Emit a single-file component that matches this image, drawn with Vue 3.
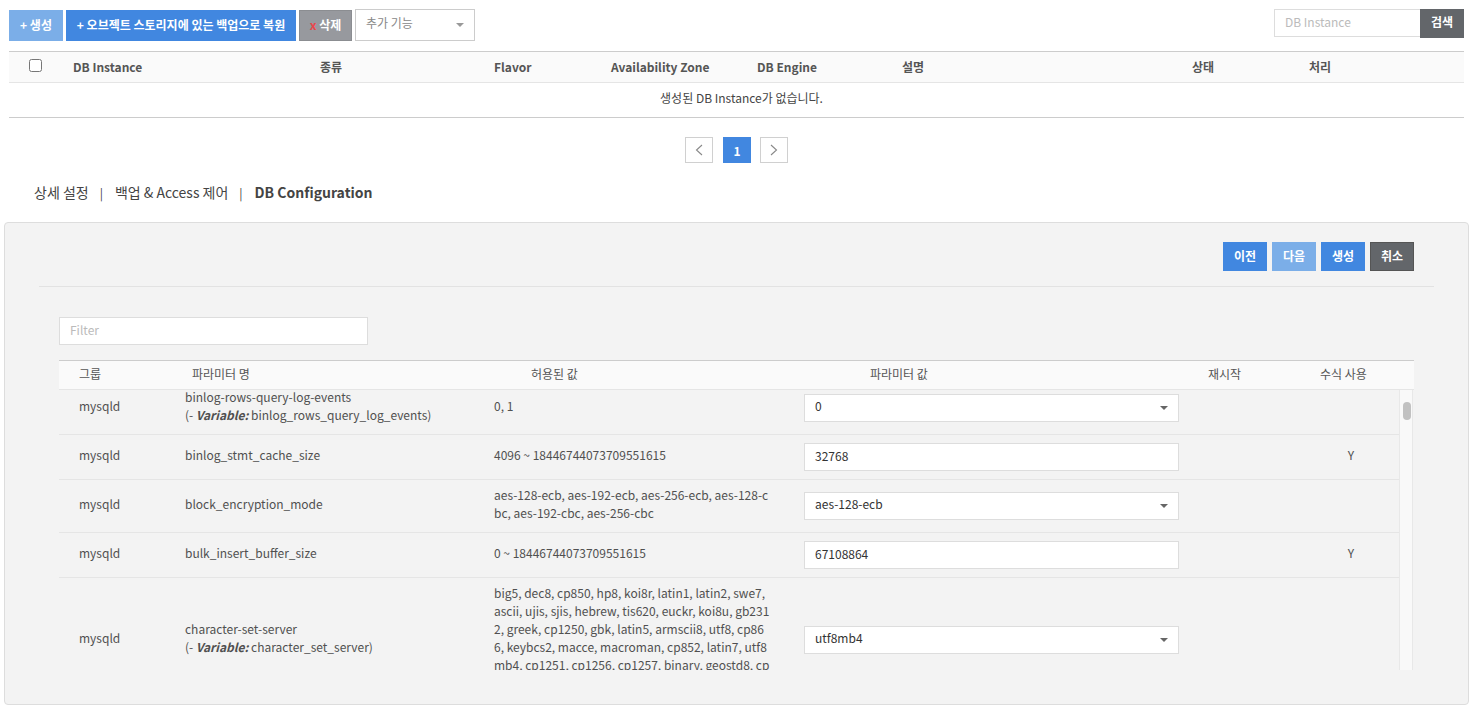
<template>
  <div class="page">
    <div class="toolbar">
      <button type="button" class="btn btn-light">+ 생성</button>
      <button type="button" class="btn btn-blue">+ 오브젝트 스토리지에 있는 백업으로 복원</button>
      <button type="button" class="btn btn-gray"><span class="x">x</span> 삭제</button>
      <div class="select extra">
        <span>추가 기능</span>
        <i class="caret"></i>
      </div>
      <div class="search">
        <input type="text" class="search-input" placeholder="DB Instance" />
        <button type="button" class="btn btn-dark search-btn">검색</button>
      </div>
    </div>

    <div class="db-table">
      <div class="db-head">
        <div class="check-cell"><input type="checkbox" class="check" /></div>
        <div v-for="col in dbColumns" :key="col">{{ col }}</div>
      </div>
      <div class="db-empty">생성된 DB Instance가 없습니다.</div>
    </div>

    <div class="pager">
      <button type="button" class="page-btn">
        <svg width="8" height="12" viewBox="0 0 8 12"><path d="M7 1 L1.5 6 L7 11" fill="none" stroke="#888" stroke-width="1.1" /></svg>
      </button>
      <button type="button" class="page-btn current">1</button>
      <button type="button" class="page-btn">
        <svg width="8" height="12" viewBox="0 0 8 12"><path d="M1 1 L6.5 6 L1 11" fill="none" stroke="#888" stroke-width="1.1" /></svg>
      </button>
    </div>

    <div class="tabs">
      <a>상세 설정</a>
      <span class="sep">|</span>
      <a>백업 &amp; Access 제어</a>
      <span class="sep">|</span>
      <a class="active">DB Configuration</a>
    </div>

    <div class="panel">
      <div class="panel-actions">
        <button type="button" class="btn btn-blue act">이전</button>
        <button type="button" class="btn btn-light act">다음</button>
        <button type="button" class="btn btn-blue act">생성</button>
        <button type="button" class="btn btn-dark act bordered">취소</button>
      </div>

      <div class="panel-body">
        <input type="text" class="filter" placeholder="Filter" />

        <div class="param-head">
          <div class="h-group">그룹</div>
          <div class="h-name">파라미터 명</div>
          <div class="h-allowed">허용된 값</div>
          <div class="h-value">파라미터 값</div>
          <div>재시작</div>
          <div>수식 사용</div>
        </div>

        <div class="param-wrap">
          <div class="param-rows" ref="rowsBox">
            <div v-for="row in params" :key="row.name" class="param-row">
              <div class="c-group cell-text">mysqld</div>
              <div class="c-name cell-text">
                {{ row.name }}
                <template v-if="row.variable">
                  <br />(- <b><i>Variable:</i></b> {{ row.variable }})
                </template>
              </div>
              <div class="c-allowed cell-text">{{ row.allowed }}</div>
              <div>
                <div v-if="row.select" class="select value-box">
                  <span>{{ row.value }}</span>
                  <i class="caret dark"></i>
                </div>
                <input v-else type="text" class="value-box text" :value="row.value" />
              </div>
              <div></div>
              <div class="c-formula cell-text">{{ row.formula ? 'Y' : '' }}</div>
            </div>
          </div>
          <div class="scroll-track"><div class="scroll-thumb"></div></div>
        </div>
      </div>
    </div>
  </div>
</template>

<script setup>
import { ref, onMounted } from 'vue';

const dbColumns = [
  'DB Instance',
  '종류',
  'Flavor',
  'Availability Zone',
  'DB Engine',
  '설명',
  '상태',
  '처리',
];

const params = [
  {
    name: 'binlog-rows-query-log-events',
    variable: 'binlog_rows_query_log_events',
    allowed: '0, 1',
    value: '0',
    select: true,
  },
  {
    name: 'binlog_stmt_cache_size',
    allowed: '4096 ~ 18446744073709551615',
    value: '32768',
    formula: true,
  },
  {
    name: 'block_encryption_mode',
    allowed: 'aes-128-ecb, aes-192-ecb, aes-256-ecb, aes-128-cbc, aes-192-cbc, aes-256-cbc',
    value: 'aes-128-ecb',
    select: true,
  },
  {
    name: 'bulk_insert_buffer_size',
    allowed: '0 ~ 18446744073709551615',
    value: '67108864',
    formula: true,
  },
  {
    name: 'character-set-server',
    variable: 'character_set_server',
    allowed:
      'big5, dec8, cp850, hp8, koi8r, latin1, latin2, swe7, ascii, ujis, sjis, hebrew, tis620, euckr, koi8u, gb2312, greek, cp1250, gbk, latin5, armscii8, utf8, cp866, keybcs2, macce, macroman, cp852, latin7, utf8mb4, cp1251, cp1256, cp1257, binary, geostd8, cp932, eucjpms',
    value: 'utf8mb4',
    select: true,
  },
];

const rowsBox = ref(null);

// the list is already scrolled a little in the screen
onMounted(() => {
  rowsBox.value.scrollTop = 8;
});
</script>

<style>
body {
  background: #fff;
}
</style>

<style scoped>
.page {
  width: 1475px;
  height: 711px;
  overflow: hidden;
  box-sizing: border-box;
  font-family: 'Noto Sans CJK KR', 'Noto Sans', sans-serif;
  font-size: 12px;
  color: #555;
}
.toolbar {
  display: flex;
  align-items: flex-start;
  padding: 9px 11px 0 9px;
  height: 51px;
  box-sizing: border-box;
}
.btn {
  border: 0;
  margin: 0;
  padding: 0 0 2px;
  color: #fff;
  font-family: inherit;
  font-size: 12px;
  font-weight: 700;
  cursor: pointer;
  white-space: pre;
}
.toolbar > .btn {
  height: 31px;
  margin-top: 1px;
  margin-right: 3px;
}
.btn-light {
  background: #7baee8;
  width: 54px;
}
.btn-blue {
  background: #4187e0;
  width: 230px;
}
.btn-gray {
  background: #97999e;
  border: 1px solid #8b8d91;
  box-sizing: border-box;
  width: 53px;
}
.btn-dark {
  background: #63666a;
}
.x {
  color: #e8474c;
}
.select {
  display: flex;
  align-items: center;
  justify-content: space-between;
  box-sizing: border-box;
  background: #fff;
  border: 1px solid #ccc;
}
.extra {
  width: 120px;
  height: 32px;
  padding: 0 10px;
  color: #888;
}
.extra span {
  padding-bottom: 5px;
}
.caret {
  display: block;
  width: 0;
  height: 0;
  border-left: 4px solid transparent;
  border-right: 4px solid transparent;
  border-top: 4px solid #999;
}
.caret.dark {
  border-top-color: #666;
}
.search {
  display: flex;
  margin-left: auto;
}
.search-input {
  width: 146px;
  height: 28px;
  box-sizing: border-box;
  border: 1px solid #ddd;
  border-right: 0;
  padding: 0 10px 4px;
  font-family: inherit;
  font-size: 12px;
  outline: none;
}
.search-input::placeholder,
.filter::placeholder {
  color: #bbb;
}
.search-btn {
  width: 44px;
  height: 29px;
  padding-bottom: 4px;
}

.db-table {
  margin: 0 11px 0 9px;
  border-top: 1px solid #ccc;
  border-bottom: 1px solid #ccc;
}
.db-head {
  display: grid;
  grid-template-columns: 64px 247px 174px 117px 146px 145px 290px 117px 155px;
  align-items: center;
  height: 31px;
  box-sizing: border-box;
  padding-bottom: 1px;
  background: #fafafa;
  border-bottom: 1px solid #e5e5e5;
  font-weight: 700;
}
.check-cell {
  display: flex;
  padding-left: 20px;
  padding-bottom: 2px;
}
.check {
  margin: 0;
  width: 13px;
  height: 13px;
}
.db-empty {
  height: 34px;
  line-height: 30px;
  padding-left: 10px;
  text-align: center;
  color: #444;
}

.pager {
  display: flex;
  justify-content: center;
  gap: 9px;
  padding-top: 19px;
  margin-left: -2px;
}
.page-btn {
  width: 28px;
  height: 26px;
  box-sizing: border-box;
  padding: 0;
  display: flex;
  align-items: center;
  justify-content: center;
  background: #fff;
  border: 1px solid #d0d0d0;
  cursor: pointer;
  font-family: inherit;
}
.page-btn.current {
  margin-left: 1px;
  background: #4187e0;
  border-color: #4187e0;
  color: #fff;
  font-size: 12px;
  font-weight: 700;
}

.tabs {
  display: flex;
  align-items: center;
  height: 20px;
  box-sizing: border-box;
  margin-top: 20px;
  padding: 0 0 2px 34px;
  font-size: 14px;
  color: #444;
}
.sep {
  font-size: 12px;
  margin: 0 12px 0 11px;
}
.active {
  font-weight: 700;
}

.panel {
  margin: 19px 6px 0 4px;
  height: 483px;
  box-sizing: border-box;
  background: #f3f3f3;
  border: 1px solid #ddd;
  border-radius: 4px;
}
.panel-actions {
  display: flex;
  justify-content: flex-end;
  gap: 5px;
  margin: 0 34px;
  padding: 19px 20px 15px 0;
  border-bottom: 1px solid #e2e2e2;
}
.act {
  width: 44px;
  height: 29px;
  padding-bottom: 3px;
}
.bordered {
  border: 1px solid #555;
  box-sizing: border-box;
}
.panel-body {
  padding: 30px 54px 0;
}
.filter {
  display: block;
  width: 309px;
  height: 28px;
  box-sizing: border-box;
  border: 1px solid #ddd;
  padding: 0 10px 4px;
  font-family: inherit;
  font-size: 12px;
  outline: none;
}

.param-head {
  display: grid;
  grid-template-columns: 125px 310px 310px 404px 112px 94px;
  align-items: center;
  margin-top: 15px;
  height: 30px;
  box-sizing: border-box;
  padding-bottom: 3px;
  background: #fafafa;
  border-top: 1px solid #ccc;
  border-bottom: 1px solid #e5e5e5;
  color: #555;
}
.h-group {
  padding-left: 20px;
}
.h-name {
  padding-left: 8px;
}
.h-allowed {
  padding-left: 37px;
}
.h-value {
  padding-left: 66px;
}

.param-wrap {
  position: relative;
}
.param-rows {
  height: 280px;
  overflow: hidden;
}
.param-row {
  display: grid;
  grid-template-columns: 125px 310px 310px 404px 112px 62px;
  align-items: center;
  padding: 8px 0;
  margin-right: 15px;
  border-bottom: 1px solid #e5e5e5;
  line-height: 18px;
  color: #505050;
}
/* the text sits a bit above the middle of the row */
.cell-text {
  margin: -2px 0 2px;
}
.c-group {
  padding-left: 20px;
}
.c-name {
  padding-left: 1px;
}
.c-allowed {
  width: 278px;
  word-break: break-all;
}
.c-formula {
  text-align: center;
}
.value-box {
  width: 375px;
  height: 28px;
  box-sizing: border-box;
  border: 1px solid #ddd;
  background: #fff;
  padding: 0 10px;
  color: #333;
  font-family: inherit;
  font-size: 12px;
}
.value-box span {
  padding-bottom: 4px;
}
.value-box.text {
  display: block;
  padding-bottom: 4px;
  outline: none;
}
.scroll-track {
  position: absolute;
  top: 0;
  right: 1px;
  width: 14px;
  height: 280px;
  padding-top: 12px;
  background: #f9f9f9;
  border-left: 1px solid #e8e8e8;
  border-right: 1px solid #e8e8e8;
  box-sizing: border-box;
}
.scroll-thumb {
  width: 8px;
  height: 18px;
  margin-left: 3px;
  border-radius: 4px;
  background: #c1c1c1;
}
</style>
